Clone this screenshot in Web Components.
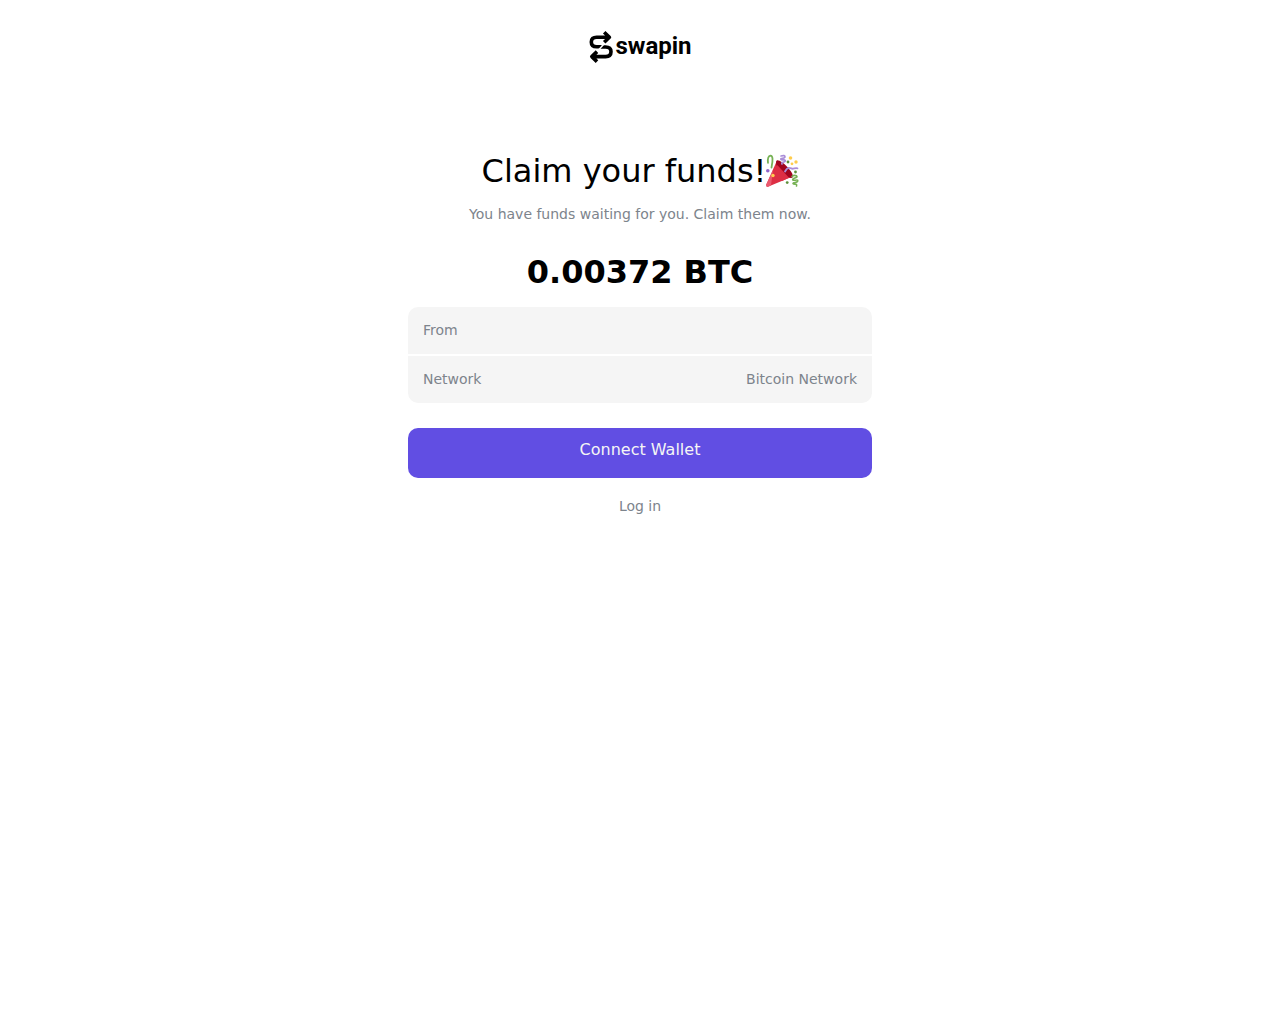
<!DOCTYPE html>
<html lang="en">
<head>
<meta charset="utf-8">
<meta name="viewport" content="width=device-width, initial-scale=1">
<title>Swapin – Claim your funds</title>
<style>
  body { margin: 0; background: #fff; color: #000; font-family: "DejaVu Sans", sans-serif; --muted: #7d848c; --panel: #f5f5f5; --accent: #614ee3; }
</style>
</head>
<body>
<claim-page>
  <swapin-logo slot="header"></swapin-logo>
  <claim-heading>Claim your funds!<span slot="note">You have funds waiting for you. Claim them now.</span></claim-heading>
  <claim-amount>0.00372 BTC</claim-amount>
  <detail-list>
    <detail-row><span slot="term">From</span></detail-row>
    <detail-row><span slot="term">Network</span>Bitcoin Network</detail-row>
  </detail-list>
  <claim-actions></claim-actions>
</claim-page>
<script>
const define = (name, html) => {
  const template = document.createElement('template');
  template.innerHTML = html;
  customElements.define(name, class extends HTMLElement {
    constructor() {
      super();
      this.attachShadow({ mode: 'open' }).append(template.content.cloneNode(true));
    }
  });
};

define('claim-page', `
<style>
  :host { display: block; }
  header { display: flex; justify-content: center; padding: 30px 16px 0; }
  main { display: flex; flex-direction: column; box-sizing: border-box; width: 100%; max-width: 496px; margin: 0 auto; padding: 88px 16px 32px; }
</style>
<header><slot name="header"></slot></header>
<main><slot></slot></main>`);

define('swapin-logo', `
<style>
  :host { display: block; }
  a { display: flex; align-items: center; gap: 1px; color: #000; text-decoration: none; }
  svg { display: block; }
  span { font: 700 24px/32px Roboto, sans-serif; padding-bottom: 2px; }
</style>
<a href="#">
  <svg width="26" height="34" viewBox="0 0 26 34" fill="none" stroke="#000" stroke-width="3.6" stroke-linejoin="round" aria-hidden="true">
    <path d="M16.2 2.2 21.4 7.2 16.2 12.2M20.6 7.2H8.6Q3.3 7.2 3.3 12T8.6 16.8H13"/>
    <path d="M9 21.6 3.8 26.6 9 31.6M4.6 26.6H17.6Q23 26.6 23 21.8T17.6 17H13"/>
    <path d="M10.5 20 16 14" stroke="#fff" stroke-width="1.4"/>
  </svg>
  <span>swapin</span>
</a>`);

define('claim-heading', `
<style>
  :host { display: block; text-align: center; }
  h1 { display: flex; justify-content: center; align-items: center; margin: 0 0 14px; font-size: 32px; line-height: 38px; font-weight: 400; }
  svg { flex: none; overflow: visible; }
  p { margin: 0; font-size: 14px; line-height: 20px; color: var(--muted); }
</style>
<h1><span><slot></slot></span>
  <svg width="32" height="32" viewBox="1 1 32 32" fill="none" stroke-linecap="round" role="img" aria-label="Party popper">
    <path d="M12 6.5 1.3 30.5Q.6 33.3 3.5 32.5L27 22.8Z" fill="#dd2e44"/>
    <path d="M8 16 1.3 30.5Q.6 33.3 3.5 32.5L6 31.5Z" fill="#ea596e"/>
    <path d="M12 6.2C9 8 13 17 20 21.5 24 24 28 25 28 22.2 28 18 17 5.5 12 6.2Z" fill="#a0041e"/>
    <path d="M12.3 11 24 23.8 17 27 9 19Z" fill="#dd2e44"/>
    <path d="M3 8.8Q2.2 2.2 5.5 1.6 9 1.8 6.5 13.5" stroke="#77b255" stroke-width="1.8"/>
    <path d="M16 2Q20 .8 20 3C19.5 5 15.5 3.8 15.8 5.3 16.5 7 20.5 4.7 20.3 7 19 9 16 7.6 17 10" stroke="#aa8dd8" stroke-width="1.7"/>
    <path d="M20 17.5C23 11.5 26 14.5 27 14.7 29 15 30 13.7 32.5 14.3" stroke="#aa8dd8" stroke-width="1.8"/>
    <path d="M27 22.5Q29 20.8 31.5 21.8C34 24 26.5 24 27.8 26 29 27.2 33 24.8 32.8 27 32 29.5 28 27.5 28 29.5 29 31 32.5 29 31.5 32" stroke="#77b255" stroke-width="1.6"/>
    <g fill="#ffcc4d"><circle cx="25.5" cy="4" r="1.8"/><circle cx="31" cy="8" r="1.7"/><circle cx="27" cy="9.8" r="1.4"/><circle cx="8" cy="21.5" r="1.7"/></g>
    <g fill="#5c913b"><circle cx="23" cy="8" r="1.4"/><circle cx="30.5" cy="18" r="1.4"/><circle cx="22.2" cy="28.6" r="1.4"/></g>
    <circle cx="2.8" cy="16.8" r="1.8" fill="#9266cc"/>
  </svg>
</h1>
<p><slot name="note"></slot></p>`);

define('claim-amount', `
<style>
  :host { display: block; padding: 29px 0 16px; text-align: center; }
  h2 { margin: 0; font-size: 32px; line-height: 38px; font-weight: 700; }
</style>
<h2><slot></slot></h2>`);

define('detail-list', `
<style>
  :host { display: flex; flex-direction: column; gap: 2px; border-radius: 10px; overflow: hidden; }
</style>
<slot></slot>`);

define('detail-row', `
<style>
  :host { display: flex; justify-content: space-between; gap: 16px; padding: 13px 15px 14px; background: var(--panel); color: var(--muted); font-size: 14px; line-height: 20px; }
</style>
<slot name="term"></slot><span><slot></slot></span>`);

define('claim-actions', `
<style>
  :host { display: flex; flex-direction: column; align-items: center; gap: 18px; padding-top: 25px; }
  button { width: 100%; height: 50px; padding: 0 16px 6px; border: 0; border-radius: 10px; background: var(--accent); color: #f5f5f5; font: inherit; font-size: 16px; line-height: 20px; cursor: pointer; }
  a { color: var(--muted); font-size: 14px; line-height: 20px; text-decoration: none; }
</style>
<button type="button">Connect Wallet</button>
<a href="#login">Log in</a>`);
</script>
</body>
</html>
